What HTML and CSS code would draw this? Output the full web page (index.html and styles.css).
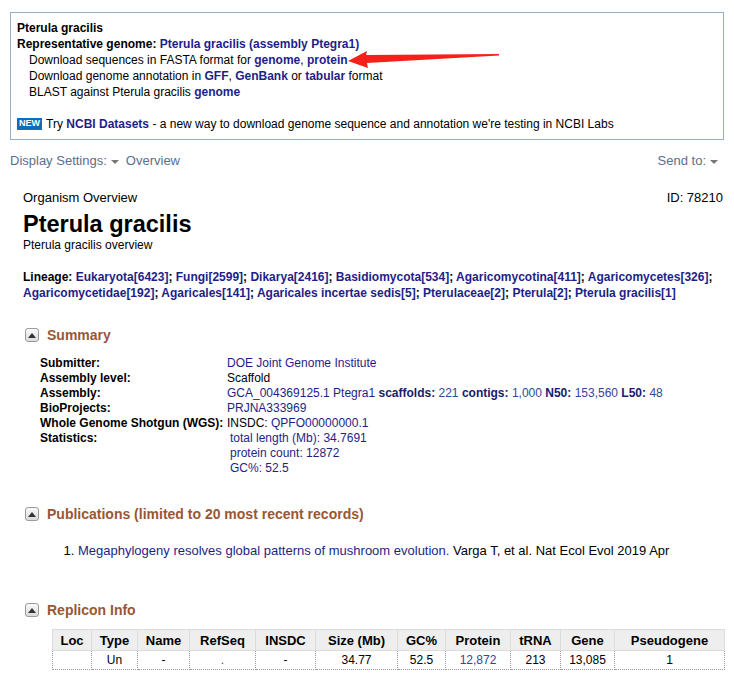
FILE: index.html
```html
<!DOCTYPE html>
<html>
<head>
<meta charset="utf-8">
<link rel="stylesheet" href="styles.css">
</head>
<body>
<div class="page">
  <div class="infobox">
    <div class="b">Pterula gracilis</div>
    <div class="b">Representative genome: <a href="#">Pterula gracilis (assembly Ptegra1)</a></div>
    <div class="sub">Download sequences in FASTA format for <a class="b" href="#">genome</a>, <a class="b" href="#">protein</a></div>
    <div class="sub">Download genome annotation in <a class="b" href="#">GFF</a>, <a class="b" href="#">GenBank</a> or <a class="b" href="#">tabular</a> format</div>
    <div class="sub">BLAST against Pterula gracilis <a class="b" href="#">genome</a></div>
    <div class="newline"><span class="newbadge">NEW</span> Try <a class="b" href="#">NCBI Datasets</a> - a new way to download genome sequence and annotation we're testing in NCBI Labs</div>
    <svg class="arrow" width="160" height="24" viewBox="0 0 160 24"><polygon points="0,11 19,1 18,5 151,4 151,5.5 19,13 20,18" fill="#f5201a"/></svg>
  </div>

  <div class="toolbar">
    <div class="tl"><span>Display Settings:</span><span class="caret"></span><span class="ov">Overview</span></div>
    <div class="tr"><span>Send to:</span><span class="caret"></span></div>
  </div>

  <div class="content">
    <div class="ovhead"><span>Organism Overview</span><span>ID: 78210</span></div>
    <h1>Pterula gracilis</h1>
    <div class="subtitle">Pterula gracilis overview</div>

    <div class="lineage">Lineage: <a href="#">Eukaryota[6423]</a>; <a href="#">Fungi[2599]</a>; <a href="#">Dikarya[2416]</a>; <a href="#">Basidiomycota[534]</a>; <a href="#">Agaricomycotina[411]</a>; <a href="#">Agaricomycetes[326]</a>; <a href="#">Agaricomycetidae[192]</a>; <a href="#">Agaricales[141]</a>; <a href="#">Agaricales incertae sedis[5]</a>; <a href="#">Pterulaceae[2]</a>; <a href="#">Pterula[2]</a>; <a href="#">Pterula gracilis[1]</a></div>

    <div class="sechead sum"><span class="tog"><svg width="8" height="5" viewBox="0 0 8 5"><polygon points="0,5 4,0 8,5" fill="#333"/></svg></span>Summary</div>
    <div class="summary">
      <div class="lbl">Submitter:</div><div><a class="n" href="#">DOE Joint Genome Institute</a></div>
      <div class="lbl">Assembly level:</div><div>Scaffold</div>
      <div class="lbl">Assembly:</div><div><a class="n" href="#">GCA_004369125.1 Ptegra1</a> <b class="nv">scaffolds:</b> <span class="lt">221</span> <b class="nv">contigs:</b> <span class="lt">1,000</span> <b class="nv">N50:</b> <span class="lt">153,560</span> <b class="nv">L50:</b> <span class="lt">48</span></div>
      <div class="lbl">BioProjects:</div><div><a class="n" href="#">PRJNA333969</a></div>
      <div class="lbl">Whole Genome Shotgun (WGS):</div><div>INSDC: <a class="n" href="#">QPFO00000000.1</a></div>
      <div class="lbl">Statistics:</div><div class="stats"><div>total length (Mb): 34.7691</div><div>protein count: 12872</div><div>GC%: 52.5</div></div>
    </div>

    <div class="sechead pub"><span class="tog"><svg width="8" height="5" viewBox="0 0 8 5"><polygon points="0,5 4,0 8,5" fill="#333"/></svg></span>Publications (limited to 20 most recent records)</div>
    <ol class="pubs">
      <li><a href="#">Megaphylogeny resolves global patterns of mushroom evolution.</a> Varga T, et al. Nat Ecol Evol 2019 Apr</li>
    </ol>

    <div class="sechead rep"><span class="tog"><svg width="8" height="5" viewBox="0 0 8 5"><polygon points="0,5 4,0 8,5" fill="#333"/></svg></span>Replicon Info</div>
    <table class="rtable">
      <colgroup>
        <col style="width:39px"><col style="width:46px"><col style="width:52px"><col style="width:66px"><col style="width:60px"><col style="width:82px"><col style="width:48px"><col style="width:65px"><col style="width:50px"><col style="width:54px"><col style="width:110px">
      </colgroup>
      <thead>
        <tr><th>Loc</th><th>Type</th><th>Name</th><th>RefSeq</th><th>INSDC</th><th>Size (Mb)</th><th>GC%</th><th>Protein</th><th>tRNA</th><th>Gene</th><th>Pseudogene</th></tr>
      </thead>
      <tbody>
        <tr><td></td><td>Un</td><td>-</td><td><a class="lt" href="#">.</a></td><td>-</td><td>34.77</td><td>52.5</td><td><a class="lt" href="#">12,872</a></td><td>213</td><td>13,085</td><td>1</td></tr>
      </tbody>
    </table>
  </div>
</div>
</body>
</html>
```

FILE: styles.css
```css
html, body {
  margin: 0;
  padding: 0;
  background: #fff;
}
body {
  font-family: "Liberation Sans", Arial, sans-serif;
  font-size: 12px;
  color: #000;
}
a {
  color: #1e1e88;
  text-decoration: none;
}
.b { font-weight: bold; }
.page {
  padding: 12px 10px 0 10px;
}
.infobox {
  position: relative;
  border: 1px solid #97afc6;
  padding: 7px 6px 5px 6px;
  line-height: 16px;
  height: 114px;
}
.infobox .sub {
  padding-left: 12px;
}
.newline {
  margin-top: 16px;
}
.newbadge {
  display: inline-block;
  background: #0a6ebd;
  color: #fff;
  font-size: 9px;
  font-weight: bold;
  line-height: 11px;
  padding: 0 2px 1px 2px;
  vertical-align: 2px;
  margin-right: 1px;
}
.arrow {
  position: absolute;
  left: 337px;
  top: 37px;
}
.toolbar {
  display: flex;
  justify-content: space-between;
  margin-top: 13px;
  font-size: 13px;
  color: #5b6e8e;
  line-height: 16px;
}
.toolbar .tl, .toolbar .tr {
  display: flex;
  align-items: center;
}
.caret {
  display: inline-block;
  width: 0;
  height: 0;
  border-left: 4px solid transparent;
  border-right: 4px solid transparent;
  border-top: 4px solid #777;
  margin: 2px 7px 0 4px;
}
.toolbar .tr .caret { margin-right: 6px; }
.content {
  padding-left: 13px;
}
.ovhead {
  display: flex;
  justify-content: space-between;
  font-size: 13px;
  margin-top: 21px;
  line-height: 16px;
  padding-right: 1px;
}
h1 {
  margin: 4px 0 0 0;
  font-size: 23.5px;
  line-height: 28px;
  font-weight: bold;
}
.subtitle {
  line-height: 14px;
}
.lineage {
  margin-top: 17px;
  font-weight: bold;
  line-height: 16px;
}
.sechead {
  display: flex;
  align-items: center;
  font-size: 14px;
  font-weight: bold;
  color: #985735;
  line-height: 18px;
  padding-left: 2px;
}
.tog {
  display: inline-flex;
  align-items: center;
  justify-content: center;
  width: 12px;
  height: 12px;
  border: 1px solid #9a9a9a;
  border-radius: 3px;
  background: linear-gradient(#fafafa, #dcdcdc);
  margin-right: 8px;
}
.sum { margin-top: 25px; }
.summary {
  display: grid;
  grid-template-columns: 187px 1fr;
  padding-left: 17px;
  margin-top: 12px;
  line-height: 15px;
}
.summary .lbl { font-weight: bold; }
.n { color: #1e1e88; }
.lt { color: #2d4a94; }
.nv { color: #1a1a6e; }
.stats { padding-left: 3px; color: #1e1e88; }
.pub { margin-top: 29px; }
.pubs {
  margin: 20px 0 0 0;
  padding-left: 55px;
  font-size: 13px;
  line-height: 15px;
}
.rep { margin-top: 43px; }
.rtable {
  margin-top: 10px;
  margin-left: 29px;
  border-collapse: collapse;
  table-layout: fixed;
  width: 672px;
  font-size: 12px;
}
.rtable th {
  background: #eeeeee;
  border: 1px solid #dcdcdc;
  font-weight: bold;
  font-size: 13px;
  height: 20px;
  padding: 0;
  text-align: center;
}
.rtable td {
  border: 1px dotted #999;
  height: 18px;
  padding: 0 2px;
  text-align: center;
}
```
